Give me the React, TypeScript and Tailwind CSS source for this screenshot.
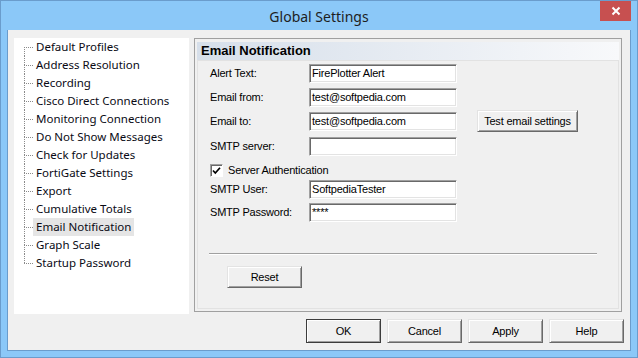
import React from 'react';

const treeItems = [
  'Default Profiles',
  'Address Resolution',
  'Recording',
  'Cisco Direct Connections',
  'Monitoring Connection',
  'Do Not Show Messages',
  'Check for Updates',
  'FortiGate Settings',
  'Export',
  'Cumulative Totals',
  'Email Notification',
  'Graph Scale',
  'Startup Password'
];

function Button({
  label,
  isDefault = false,
  className = ''
}: {
  label: string;
  isDefault?: boolean;
  className?: string;
}) {
  const edge = isDefault
    ? 'border-[#3c3c3c] shadow-[inset_1px_1px_0_#ffffff,inset_-1px_-1px_0_#a0a0a0]'
    : 'border-t-[#e3e3e3] border-l-[#e3e3e3] border-r-[#696969] border-b-[#696969] shadow-[inset_1px_1px_0_#ffffff,inset_-1px_-1px_0_#a0a0a0]';
  return (
    <div
      className={`flex items-center justify-center border bg-[#f0f0f0] ${edge} ${className}`}
    >
      {label}
    </div>
  );
}

function Field({ value = '', className = '' }: { value?: string; className?: string }) {
  return (
    <div
      className={`flex h-[19px] w-[148px] items-center border border-t-[#a0a0a0] border-l-[#a0a0a0] border-r-white border-b-white bg-white pl-[2px] shadow-[inset_1px_1px_0_#696969,inset_-1px_-1px_0_#e3e3e3] ${className}`}
    >
      {value}
    </div>
  );
}

function Row({
  label,
  value,
  className = '',
  children
}: {
  label: string;
  value?: string;
  className?: string;
  children?: React.ReactNode;
}) {
  return (
    <div className={`flex h-[22px] items-center ${className}`}>
      <div className="w-[99px]">{label}</div>
      <Field value={value} />
      {children}
    </div>
  );
}

export default function App() {
  return (
    <div className="flex h-[358px] w-[638px] flex-col overflow-hidden border border-[#6a9ccc] bg-[#8bc8f8]">
      {/* title bar */}
      <div className="relative flex h-[29px] shrink-0 items-center justify-center">
        <span className="mt-[1px] font-['Noto_Sans',sans-serif] text-[14px] text-[#1e1e1e]">
          Global Settings
        </span>
        <div className="absolute right-[6px] top-0 flex h-[20px] w-[31px] items-center justify-center bg-[#c75050]">
          <svg width="10" height="10" viewBox="0 0 10 10">
            <path d="M1.5 1.5L8.5 8.5M8.5 1.5L1.5 8.5" stroke="#fff" strokeWidth="2" />
          </svg>
        </div>
      </div>

      {/* client area */}
      <div className="mx-[6px] mb-[6px] flex flex-1 flex-col border-x border-b border-[#6a9ccc] bg-[#f0f0f0] font-['Liberation_Sans',Arial,sans-serif] text-[11px] tracking-[-0.2px] text-black">
        <div className="flex gap-[5px] pl-[6px] pr-[8px] pt-[8px]">
          {/* tree */}
          <div className="h-[276px] w-[175px] bg-white pl-[10px] font-['Noto_Sans',sans-serif] text-[11.5px] tracking-normal text-[#0a0a14]">
            {treeItems.map((t, i) => {
              const first = i === 0;
              const last = i === treeItems.length - 1;
              return (
                <div key={t} className="flex h-[18px]">
                  <div className="flex w-[9px] shrink-0 flex-col">
                    <div
                      className={`h-[9px] ${first ? '' : 'border-l border-dotted border-[#8a8a8a]'}`}
                    />
                    <div
                      className={`h-[9px] border-t border-dotted border-[#8a8a8a] ${last ? '' : 'border-l'}`}
                    />
                  </div>
                  <div
                    className={`flex items-center px-[3px] ${t === 'Email Notification' ? 'bg-[#e5e5e5]' : ''}`}
                  >
                    {t}
                  </div>
                </div>
              );
            })}
          </div>

          {/* settings page */}
          <div className="flex h-[274px] w-[428px] flex-col border border-[#a0a0a0] px-[2px] pb-[2px] pt-[3px]">
            <div className="flex h-[18px] items-center bg-linear-to-r from-[#d6dfea] to-[#f8f9fb] pl-[4px] text-[13px] font-bold tracking-normal">
              Email Notification
            </div>
            <div className="flex flex-1 flex-col border border-[#e2e2e2] pl-[12px] pt-[1px]">
              <Row label="Alert Text:" value="FirePlotter Alert" />
              <Row label="Email from:" value="test@softpedia.com" className="mt-[2px]" />
              <Row label="Email to:" value="test@softpedia.com" className="mt-[2px]">
                <Button label="Test email settings" className="ml-[20px] h-[22px] w-[101px]" />
              </Row>
              <Row label="SMTP server:" className="mt-[3px]" />

              <div className="mt-[5px] flex h-[16px] items-center">
                <div className="flex h-[13px] w-[13px] items-center justify-center border border-t-[#a0a0a0] border-l-[#a0a0a0] border-r-white border-b-white bg-white shadow-[inset_1px_1px_0_#696969]">
                  <svg width="9" height="9" viewBox="0 0 9 9">
                    <path d="M1 4.5L3.3 7L8 1.8" fill="none" stroke="#000" strokeWidth="1.7" />
                  </svg>
                </div>
                <span className="ml-[5px]">Server Authentication</span>
              </div>

              <Row label="SMTP User:" value="SoftpediaTester" className="h-[21px]" />
              <Row label="SMTP Password:" value="****" className="mt-[1px]" />

              <div className="-ml-px mt-[30px] h-[2px] w-[388px] border-t border-b border-t-[#a0a0a0] border-b-white" />

              <Button label="Reset" className="ml-[17px] mt-[11px] h-[22px] w-[75px]" />
            </div>
          </div>
        </div>

        {/* dialog buttons */}
        <div className="mt-[5px] flex justify-end gap-[6px] pr-[6px]">
          <Button label="OK" isDefault className="h-[24px] w-[75px]" />
          <Button label="Cancel" className="h-[24px] w-[75px]" />
          <Button label="Apply" className="h-[24px] w-[75px]" />
          <Button label="Help" className="h-[24px] w-[75px]" />
        </div>
      </div>
    </div>
  );
}
